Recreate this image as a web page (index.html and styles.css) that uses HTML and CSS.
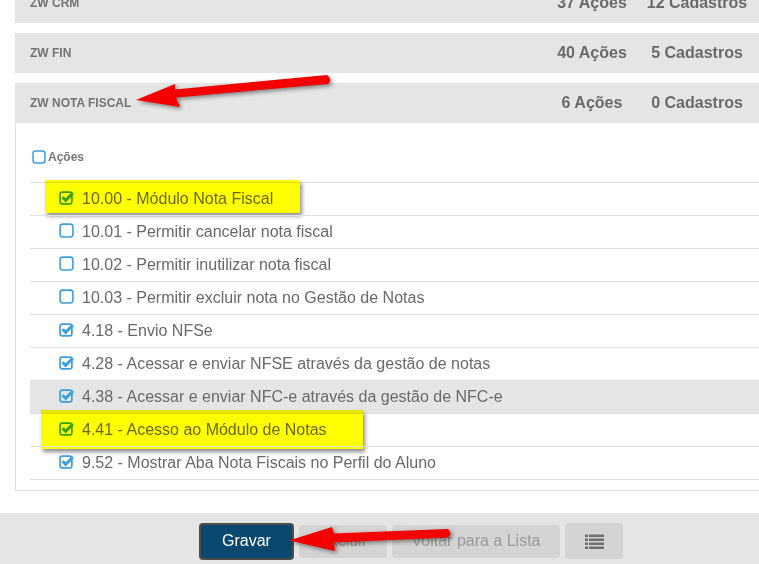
FILE: index.html
```html
<!DOCTYPE html>
<html lang="pt-BR">
<head>
  <meta charset="UTF-8" />
  <title>Permissões</title>
  <link rel="stylesheet" href="styles.css">
</head>
<body>
  <div id="page">
    <div class="modules">
      <div class="panel">
        <div class="panel-head">
          <span class="name">ZW CRM</span>
          <span class="count acoes">37 Ações</span>
          <span class="count cad">12 Cadastros</span>
        </div>
      </div>
      <div class="panel">
        <div class="panel-head">
          <span class="name">ZW FIN</span>
          <span class="count acoes">40 Ações</span>
          <span class="count cad">5 Cadastros</span>
        </div>
      </div>
      <div class="panel open">
        <div class="panel-head">
          <span class="name">ZW NOTA FISCAL</span>
          <span class="count acoes">6 Ações</span>
          <span class="count cad">0 Cadastros</span>
        </div>
        <div class="panel-body">
          <div class="all">
            <svg class="cb" viewBox="0 0 14 14"><rect x="1" y="1" width="12" height="12" rx="2.5" fill="none" stroke="#3d9fe0" stroke-width="1.5"/></svg>
            <span>Ações</span>
          </div>
          <ul class="perms">
            <li><span class="mark m1"></span><svg class="cb" viewBox="0 0 14 14"><rect x="1" y="2" width="11" height="11" rx="2" fill="none" stroke="#3d9fe0" stroke-width="1.6"/><path d="M3.3 6.8 L6.2 9.7 L13 2.8" fill="none" stroke="#3d9fe0" stroke-width="2.8"/></svg>10.00 - Módulo Nota Fiscal</li>
            <li><svg class="cb" viewBox="0 0 14 14"><rect x="1" y="1" width="12" height="12" rx="2.5" fill="none" stroke="#3d9fe0" stroke-width="1.5"/></svg>10.01 - Permitir cancelar nota fiscal</li>
            <li><svg class="cb" viewBox="0 0 14 14"><rect x="1" y="1" width="12" height="12" rx="2.5" fill="none" stroke="#3d9fe0" stroke-width="1.5"/></svg>10.02 - Permitir inutilizar nota fiscal</li>
            <li><svg class="cb" viewBox="0 0 14 14"><rect x="1" y="1" width="12" height="12" rx="2.5" fill="none" stroke="#3d9fe0" stroke-width="1.5"/></svg>10.03 - Permitir excluir nota no Gestão de Notas</li>
            <li><svg class="cb" viewBox="0 0 14 14"><rect x="1" y="2" width="11" height="11" rx="2" fill="none" stroke="#3d9fe0" stroke-width="1.6"/><path d="M3.3 6.8 L6.2 9.7 L13 2.8" fill="none" stroke="#3d9fe0" stroke-width="2.8"/></svg>4.18 - Envio NFSe</li>
            <li><svg class="cb" viewBox="0 0 14 14"><rect x="1" y="2" width="11" height="11" rx="2" fill="none" stroke="#3d9fe0" stroke-width="1.6"/><path d="M3.3 6.8 L6.2 9.7 L13 2.8" fill="none" stroke="#3d9fe0" stroke-width="2.8"/></svg>4.28 - Acessar e enviar NFSE através da gestão de notas</li>
            <li class="hover"><svg class="cb" viewBox="0 0 14 14"><rect x="1" y="2" width="11" height="11" rx="2" fill="none" stroke="#3d9fe0" stroke-width="1.6"/><path d="M3.3 6.8 L6.2 9.7 L13 2.8" fill="none" stroke="#3d9fe0" stroke-width="2.8"/></svg>4.38 - Acessar e enviar NFC-e através da gestão de NFC-e</li>
            <li><span class="mark m2"></span><svg class="cb" viewBox="0 0 14 14"><rect x="1" y="2" width="11" height="11" rx="2" fill="none" stroke="#3d9fe0" stroke-width="1.6"/><path d="M3.3 6.8 L6.2 9.7 L13 2.8" fill="none" stroke="#3d9fe0" stroke-width="2.8"/></svg>4.41 - Acesso ao Módulo de Notas</li>
            <li><svg class="cb" viewBox="0 0 14 14"><rect x="1" y="2" width="11" height="11" rx="2" fill="none" stroke="#3d9fe0" stroke-width="1.6"/><path d="M3.3 6.8 L6.2 9.7 L13 2.8" fill="none" stroke="#3d9fe0" stroke-width="2.8"/></svg>9.52 - Mostrar Aba Nota Fiscais no Perfil do Aluno</li>
          </ul>
        </div>
      </div>
    </div>

    <div class="actions">
      <button class="btn primary">Gravar</button>
      <button class="btn">Excluir</button>
      <button class="btn">Voltar para a Lista</button>
      <button class="btn icon">
        <svg width="19" height="15" viewBox="0 0 19 15" fill="#6e6e6e">
          <rect x="0" y="0.5" width="3" height="2.5"/><rect x="4" y="0.5" width="15" height="2.5"/>
          <rect x="0" y="4.5" width="3" height="2.5"/><rect x="4" y="4.5" width="15" height="2.5"/>
          <rect x="0" y="8.5" width="3" height="2.5"/><rect x="4" y="8.5" width="15" height="2.5"/>
          <rect x="0" y="12.5" width="3" height="2.5"/><rect x="4" y="12.5" width="15" height="2.5"/>
        </svg>
      </button>
    </div>
  </div>

  <!-- annotation arrows drawn on top of the screenshot -->
  <svg class="arrows" width="759" height="564" viewBox="0 0 759 564">
    <path d="M327 75 L175 89.5 L175 84 L136 100 L180 107 L176 97.5 L328 84 Q333 79 327 75 Z"/>
    <path d="M448 529 L334 533.5 L332 527 L289 540.5 L335 551 L334 542.5 L448 537.5 Q453 533 448 529 Z"/>
  </svg>
</body>
</html>
```

FILE: styles.css
```css
body { margin: 0; background: #fff; font-family: "Liberation Sans", Arial, sans-serif; color: #666; overflow: hidden; }
#page { margin-top: -17px; }

.modules { padding-left: 15px; }
.panel { margin-bottom: 10px; }
.panel-head { display: flex; align-items: center; height: 40px; background: #e5e5e5; padding-left: 15px; padding-right: 7px; }
.panel-head .name { flex: 1; font-size: 12px; font-weight: bold; color: #737373; }
.panel-head .count { font-size: 16px; font-weight: bold; color: #6a6a6a; text-align: center; }
.panel-head .acoes { width: 100px; }
.panel-head .cad { width: 110px; }

.panel-body { border-left: 1px solid #dde1e3; border-bottom: 1px solid #dde1e3; padding: 27px 0 10px 14px; }
.all { display: flex; align-items: center; height: 14px; margin-bottom: 18px; margin-left: 2px; font-size: 12px; font-weight: bold; color: #777; }
.all .cb { width: 14px; height: 14px; margin-right: 2px; }

.perms { list-style: none; margin: 0; padding: 0; border-bottom: 1px solid #dde1e3; }
.perms li { position: relative; display: flex; align-items: center; height: 32px; border-top: 1px solid #dde1e3; padding-left: 29px; font-size: 16px; color: #696969; }
.perms li.hover { background: #e5e5e5; }
.perms .cb { width: 15px; height: 15px; margin-right: 8px; margin-top: -3px; }

.mark { position: absolute; background: #ffff00; mix-blend-mode: multiply; box-shadow: 2px 3px 4px rgba(0, 0, 0, 0.45); }
.m1 { left: 15px; top: -3px; width: 255px; height: 33px; }
.m2 { left: 11px; top: -4px; width: 322px; height: 39px; }

.actions { display: flex; align-items: center; gap: 5px; margin-top: 22px; background: #e5e5e5; height: 56px; padding-left: 199px; }
.btn { font-family: "Liberation Sans", Arial, sans-serif; font-size: 16px; height: 33px; padding: 0 20px; border: 0; border-radius: 4px; background: #d6d4d2; color: #9a9a9a; }
.btn.primary { height: 37px; width: 95px; padding: 0; background: #0b4870; color: #fff; border: 2px solid #4c4c4c; }
.btn.icon { width: 58px; height: 36px; padding: 0; display: flex; align-items: center; justify-content: center; }
.actions .btn:nth-child(2) { width: 88px; padding: 0; }
.actions .btn:nth-child(3) { width: 168px; padding: 0; }

.arrows { position: absolute; left: 0; top: 0; fill: #f40000; filter: drop-shadow(2px 2px 2px rgba(0, 0, 0, 0.45)); }
```
